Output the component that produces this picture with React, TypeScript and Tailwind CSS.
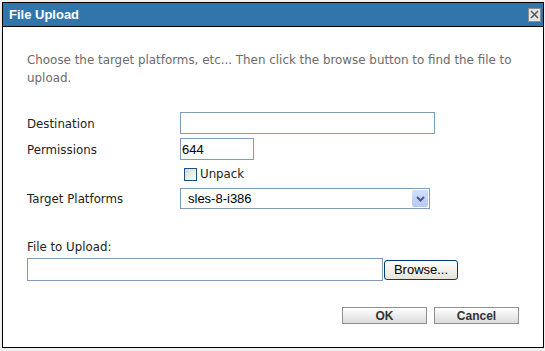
import React from "react";

const labelCls = "font-['DejaVu_Sans',sans-serif] text-[11.8px] leading-[18px] text-[#222]";

function Chevron() {
  return (
    <svg width="9" height="6" viewBox="0 0 9 6" aria-hidden="true">
      <path d="M1 1 L4.5 4.5 L8 1" fill="none" stroke="#4b5d85" strokeWidth="2" />
    </svg>
  );
}

export default function App() {
  return (
    <div className="min-h-screen bg-[#f0f0f0] pl-[2px] pt-[2px] font-['Liberation_Sans',Arial,sans-serif]">
      <div className="w-[542px] h-[346px] border border-black bg-white flex flex-col">
        {/* title bar */}
        <div className="h-[24px] bg-[#3175ad] border-b border-black flex items-center justify-between pl-[6px] pr-[2px]">
          <span className="text-white font-bold text-[13px] leading-none">File Upload</span>
          <button className="w-[13px] h-[14px] bg-[#e4e4e4] border border-[#8c8c8c] flex items-center justify-center">
            <svg width="9" height="9" viewBox="0 0 9 9" aria-hidden="true">
              <path d="M1 1 L8 8 M8 1 L1 8" stroke="#5a5a5a" strokeWidth="1.6" />
            </svg>
          </button>
        </div>

        {/* body */}
        <div className="flex-1 pl-6 pr-6">
          <p className="mt-6 w-[492px] font-['DejaVu_Sans',sans-serif] text-[11.9px] leading-[18px] text-[#6b6b6b]">
            Choose the target platforms, etc... Then click the browse button to find the file to upload.
          </p>

          <div className="mt-[25px] grid grid-cols-[153px_1fr] gap-y-1 items-center">
            <span className={`${labelCls} pt-[2px]`}>Destination</span>
            <input className="w-[255px] h-[22px] border border-[#7f9db9] outline-none px-1 text-[13px]" />

            <span className={`${labelCls} pt-[1px]`}>Permissions</span>
            <input
              className="w-[74px] h-[22px] border border-[#7f9db9] outline-none pl-[1px] text-[13px] text-black"
              defaultValue="644"
            />

            <span />
            <label className="h-[20px] flex items-center gap-[3px] pl-1">
              <span className="w-[13px] h-[13px] border border-[#1c5180] bg-gradient-to-br from-[#d6d6d0] to-white" />
              <span className={labelCls}>Unpack</span>
            </label>

            <span className={labelCls}>Target Platforms</span>
            <div className="w-[250px] h-[21px] border border-[#7f9db9] flex items-center justify-between p-px">
              <span className="pl-[6px] text-[13px] text-black">sles-8-i386</span>
              <span className="w-[16px] h-full rounded-[2px] bg-gradient-to-b from-[#d2defc] to-[#b6c9f6] flex items-center justify-center">
                <Chevron />
              </span>
            </div>
          </div>

          <div className={`mt-[29px] ${labelCls}`}>File to Upload:</div>
          <div className="mt-[2px] flex items-center gap-px">
            <input className="w-[356px] h-[23px] border border-[#7f9db9] outline-none px-1 text-[13px]" />
            <button className="w-[74px] h-[20px] rounded-[3px] border border-[#003c74] bg-gradient-to-b from-white to-[#e6e3d6] text-[13px] text-black leading-none">
              Browse...
            </button>
          </div>

          <div className="mt-[26px] flex justify-end gap-[7px]">
            <button className="w-[85px] h-[17px] border border-[#909090] bg-gradient-to-b from-white to-[#dcdcdc] text-[12px] font-bold text-[#333] leading-none">
              OK
            </button>
            <button className="w-[85px] h-[17px] border border-[#909090] bg-gradient-to-b from-white to-[#dcdcdc] text-[12px] font-bold text-[#333] leading-none">
              Cancel
            </button>
          </div>
        </div>
      </div>
    </div>
  );
}
